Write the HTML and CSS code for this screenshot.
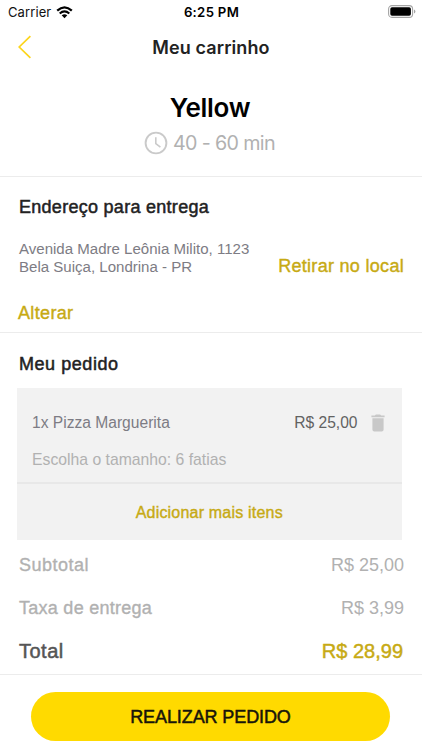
FILE: index.html
```html
<!DOCTYPE html>
<html lang="pt-BR">
<head>
<meta charset="utf-8">
<title>Meu carrinho</title>
<link rel="stylesheet" href="styles.css">
</head>
<body>
<div class="screen">
  <div class="status">
    <div class="carrier"><span class="carrier-name">Carrier</span>
      <svg class="wifi" width="17" height="13" viewBox="0 0 17 13"><path d="M1.2 4.7Q8.5-1.9 15.8 4.7" fill="none" stroke="#000" stroke-width="2.3"/><path d="M3.7 7.5Q8.5 3.2 13.3 7.5" fill="none" stroke="#000" stroke-width="2.1"/><path d="M5.7 9.3Q8.5 7 11.3 9.3L8.5 12.2Z"/></svg>
    </div>
    <span class="time">6:25 PM</span>
    <svg class="battery" width="28" height="13" viewBox="0 0 28 13"><rect x=".6" y=".6" width="24" height="11.8" rx="3.4" fill="#fff" stroke="#a5a5a5" stroke-width="1.1"/><rect x="2.3" y="2.3" width="20.6" height="8.4" rx="1.7"/><path d="M26 4.6Q27.4 5 27.4 6.5T26 8.4Z" fill="#a5a5a5"/></svg>
  </div>
  <header class="nav">
    <svg class="back" width="14" height="24" viewBox="0 0 14 24"><path d="M12.4 1.2 1.2 12 12.4 22.8" fill="none" stroke="#fcd51c" stroke-width="1.7"/></svg>
    <h1 class="nav-title">Meu carrinho</h1>
  </header>
  <section class="store">
    <h2 class="store-name">Yellow</h2>
    <div class="eta">
      <svg class="clock" width="24" height="24" viewBox="0 0 24 24" fill="none" stroke="#cacaca"><circle cx="12" cy="12" r="10.4" stroke-width="1.9"/><path d="M11.8 6.3V12.5L16.4 16.2" stroke-width="1.6"/></svg>
      <span class="eta-text">40 - 60 min</span>
    </div>
  </section>
  <section class="address">
    <h3 class="heading h-address">Endereço para entrega</h3>
    <div class="address-row">
      <p class="address-text">Avenida Madre Leônia Milito, 1123<br>Bela Suiça, Londrina - PR</p>
      <a class="link pickup">Retirar no local</a>
    </div>
    <a class="link change">Alterar</a>
  </section>
  <section class="order">
    <h3 class="heading h-order">Meu pedido</h3>
    <div class="card">
      <div class="item">
        <div class="item-row"><span class="item-name">1x Pizza Marguerita</span><span class="item-price">R$ 25,00</span>
          <svg class="trash" width="14" height="18" viewBox="0 0 14 18" fill="#c8c8c8"><path d="M.4 1.6H3.8L4.9.5H9.1L10.2 1.6H13.6V3.3H.4ZM1.4 4.2H12.6V15.6Q12.6 17.5 10.7 17.5H3.3Q1.4 17.5 1.4 15.6Z"/></svg>
        </div>
        <div class="option">Escolha o tamanho: 6 fatias</div>
      </div>
      <a class="link add"><span>Adicionar mais itens</span></a>
    </div>
    <div class="sum"><span class="sum-label subtotal">Subtotal</span><span class="sum-value">R$ 25,00</span></div>
    <div class="sum"><span class="sum-label fee">Taxa de entrega</span><span class="sum-value">R$ 3,99</span></div>
    <div class="sum total"><span class="total-label">Total</span><span class="total-value">R$ 28,99</span></div>
  </section>
  <footer class="footer"><button class="submit">REALIZAR PEDIDO</button></footer>
</div>
</body>
</html>
```
FILE: styles.css
```css
* { box-sizing: border-box; margin: 0; padding: 0; }
body { width: 422px; height: 750px; overflow: hidden; background: #fff; font-family: "Liberation Sans", Arial, sans-serif; color: #222; white-space: nowrap; }
.screen { display: flex; flex-direction: column; height: 750px; }
.status { display: grid; grid-template-columns: 1fr auto 1fr; align-items: center; height: 24px; padding: 0 7px 0 8px; font-family: Inter, sans-serif; font-size: 13px; color: #111; }
.carrier { display: flex; align-items: center; gap: 5px; }
.carrier-name { letter-spacing: .1px; }
.time { font-weight: 600; font-size: 13.2px; letter-spacing: .3px; color: #000; }
.battery { justify-self: end; margin: -1px -1px 0 0; }
.nav { display: grid; grid-template-columns: 60px 1fr 60px; align-items: center; height: 46px; }
.back { margin: -2px 0 0 18px; }
.nav-title { text-align: center; padding-top: 1px; font: 600 18px/46px Inter, sans-serif; letter-spacing: .1px; }
.store { height: 107px; padding-top: 20px; border-bottom: 1px solid #ececec; text-align: center; font-family: Inter, sans-serif; }
.store-name { font-size: 26px; line-height: 36px; font-weight: 600; color: #000; letter-spacing: -.3px; margin-right: 2px; }
.eta { display: flex; justify-content: center; align-items: center; gap: 5px; height: 34px; margin-right: 3px; font-size: 19.7px; letter-spacing: -.65px; color: #b1b1b1; }
.heading { font-weight: 400; font-size: 18px; line-height: 24px; color: #222; -webkit-text-stroke: .5px #222; }
.address { height: 156px; padding: 18px 19px 0; border-bottom: 1px solid #ececec; }
.h-address { letter-spacing: .28px; }
.h-order { letter-spacing: .55px; }
.address-row { display: flex; justify-content: space-between; margin-top: 21px; height: 39px; }
.address-text { font-size: 15.05px; line-height: 17.5px; color: #7d7c84; }
.link { color: #c7aa14; -webkit-text-stroke: .4px #c7aa14; font-size: 18px; }
.pickup { line-height: 24px; padding-top: 14px; margin-right: -1px; letter-spacing: .3px; }
.change { display: block; line-height: 24px; margin-top: 22px; margin-left: -1px; letter-spacing: .35px; }
.order { height: 342px; padding: 19px 19px 0; border-bottom: 1px solid #ececec; }
.card { margin: 12px 1.5px 0 -2px; height: 152px; background: #f2f2f2; }
.item { height: 96px; padding: 22px 15px 0; border-bottom: 2px solid #e8e8e8; }
.item-row { display: flex; align-items: center; height: 25px; font-size: 15.6px; color: #7d7c84; }
.item-price { margin-left: auto; color: #626262; }
.trash { margin: 0 1.5px 0 13.5px; }
.option { margin-top: 13px; font-size: 15.75px; line-height: 24px; color: #b1b1b1; }
.add { display: block; text-align: center; font-size: 16px; line-height: 57px; letter-spacing: .2px; }
.sum { display: flex; justify-content: space-between; align-items: center; height: 43px; font-size: 18px; color: #b1b1b1; }
.card + .sum { margin-top: 4px; }
.sum-label { -webkit-text-stroke: .35px #b1b1b1; }
.subtotal { letter-spacing: .5px; }
.fee { letter-spacing: .27px; }
.sum-value { margin-right: -1px; }
.total { font-size: 20px; }
.total-label { color: #555; letter-spacing: .5px; -webkit-text-stroke: .5px #555; }
.total-value { color: #c7aa14; -webkit-text-stroke: .45px #c7aa14; }
.footer { padding: 17px 32px 0 31px; }
.submit { display: block; width: 359px; height: 49px; padding-top: 1px; border: 0; border-radius: 25px; background: #ffda00; color: #17150a; font: 18px/48px "Liberation Sans", Arial, sans-serif; letter-spacing: -.1px; -webkit-text-stroke: .5px #17150a; }
```
